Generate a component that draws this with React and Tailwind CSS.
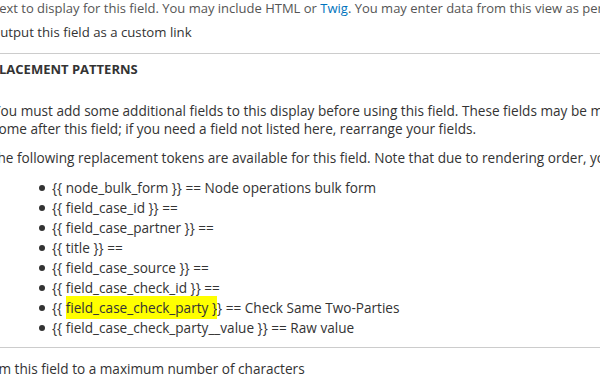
const tokens = [
  { name: "node_bulk_form", label: "Node operations bulk form" },
  { name: "field_case_id", label: "" },
  { name: "field_case_partner", label: "" },
  { name: "title", label: "" },
  { name: "field_case_source", label: "" },
  { name: "field_case_check_id", label: "" },
  { name: "field_case_check_party", label: "Check Same Two-Parties", marked: true },
  { name: "field_case_check_party__value", label: "Raw value" },
];

function TokenItem({ name, label, marked }) {
  return (
    <li className="flex items-center h-5 whitespace-nowrap">
      <span className="w-[6px] h-[6px] rounded-full bg-[#333] ml-[39px] mr-[7px] shrink-0" />
      {marked ? (
        <span>
          {"{{ "}
          <span className="bg-[#ffff00] py-[2px]">{name} {"}"}</span>
          {"}"} == {label}
        </span>
      ) : (
        <span>
          {"{{ "}
          {name} {"}}"} =={label ? ` ${label}` : ""}
        </span>
      )}
    </li>
  );
}

export default function App() {
  return (
    <div className="w-[600px] h-[388px] overflow-hidden bg-white text-[#333] text-[13.6px] leading-[18px] font-['Open_Sans','Noto_Sans',sans-serif]">
      <div className="mt-[-1px] -ml-[8px] whitespace-nowrap text-[13px] text-[#555]">
        Text to display for this field. You may include HTML or{" "}
        <a className="text-[#0074bd]">Twig</a>. You may enter data from this view as per the "Replacement patterns" below.
      </div>
      <div className="mt-[6px] -ml-[10px] whitespace-nowrap text-[13.2px]">Output this field as a custom link</div>
      <div className="mt-[12px] h-px bg-[#ccc]" />
      <div className="mt-[6px] -ml-[25px] font-bold text-[13px] whitespace-nowrap">REPLACEMENT PATTERNS</div>
      <div className="mt-[24px] -ml-[7px] whitespace-nowrap">
        <p>You must add some additional fields to this display before using this field. These fields may be marked as</p>
        <p className="-ml-[1px]">come after this field; if you need a field not listed here, rearrange your fields.</p>
      </div>
      <p className="mt-[11px] -ml-[10px] whitespace-nowrap">
        The following replacement tokens are available for this field. Note that due to rendering order, you can only use fields
      </p>
      <ul className="mt-[11px]">
        {tokens.map((t) => (
          <TokenItem key={t.name} {...t} />
        ))}
      </ul>
      <div className="mt-[9px] h-px bg-[#ccc]" />
      <div className="mt-[12px] -ml-[18px] whitespace-nowrap">Trim this field to a maximum number of characters</div>
    </div>
  );
}
